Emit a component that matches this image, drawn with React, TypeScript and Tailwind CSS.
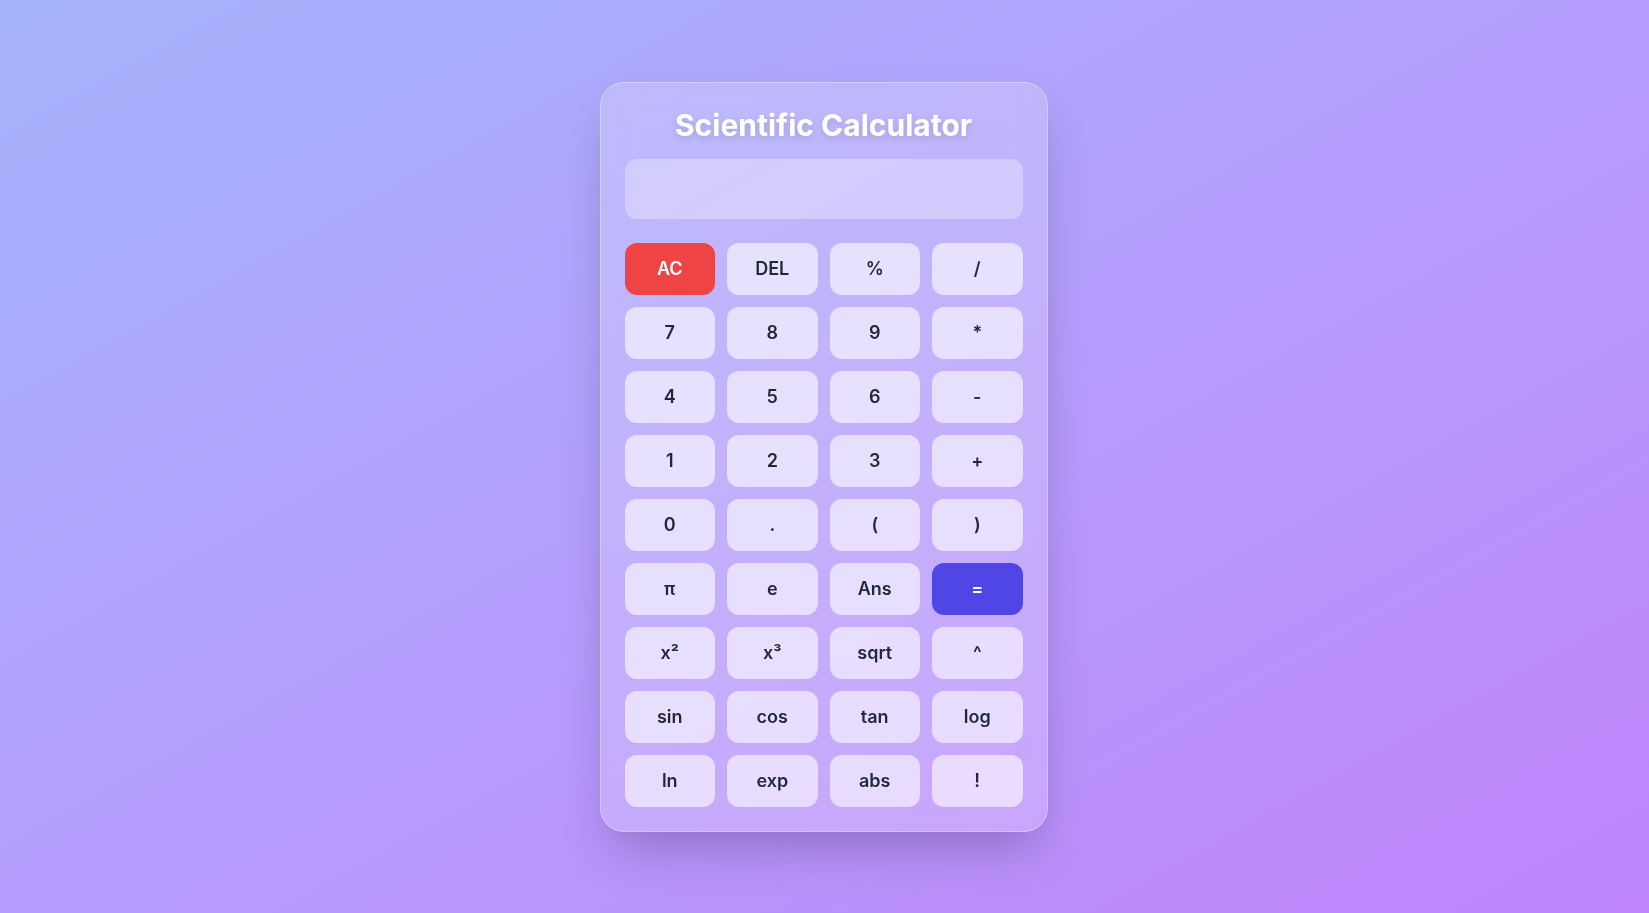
import { useState } from 'react';

const keys: string[][] = [
  ['AC', 'DEL', '%', '/'],
  ['7', '8', '9', '*'],
  ['4', '5', '6', '-'],
  ['1', '2', '3', '+'],
  ['0', '.', '(', ')'],
  ['π', 'e', 'Ans', '='],
  ['x²', 'x³', 'sqrt', '^'],
  ['sin', 'cos', 'tan', 'log'],
  ['ln', 'exp', 'abs', '!'],
];

export default function App() {
  const [display, setDisplay] = useState('');

  const press = (k: string) => {
    if (k === 'AC') setDisplay('');
    else if (k === 'DEL') setDisplay((d) => d.slice(0, -1));
    else if (k === '=') return;
    else setDisplay((d) => d + k);
  };

  return (
    <div
      className="flex min-h-screen items-center justify-center bg-gradient-to-br from-[#a5b4fc] to-[#c084fc]"
      style={{ fontFamily: 'Inter, "Noto Sans", sans-serif' }}
    >
      <div className="w-full max-w-md -translate-x-[1px] rounded-3xl border border-white/30 bg-white/20 p-6 shadow-2xl backdrop-blur-lg">
        <h1 className="mb-4 text-center text-3xl font-bold text-white drop-shadow-md">
          Scientific Calculator
        </h1>

        {/* Display */}
        <div className="mb-6 flex h-[60px] items-center justify-end overflow-hidden rounded-xl bg-white/30 px-4 text-right text-2xl font-semibold text-[#1f2937]">
          {display}
        </div>

        <div className="grid grid-cols-4 gap-3">
          {keys.flat().map((k) => {
            let style = 'bg-white/60 text-[#1f2937] hover:bg-white/80';
            if (k === 'AC') style = 'bg-[#ef4444] text-white hover:bg-[#dc2626]';
            if (k === '=') style = 'bg-[#4f46e5] text-white hover:bg-[#4338ca]';
            return (
              <button
                key={k}
                onClick={() => press(k)}
                className={`h-[52px] rounded-xl text-lg font-semibold transition-colors ${style}`}
              >
                {k}
              </button>
            );
          })}
        </div>
      </div>
    </div>
  );
}
